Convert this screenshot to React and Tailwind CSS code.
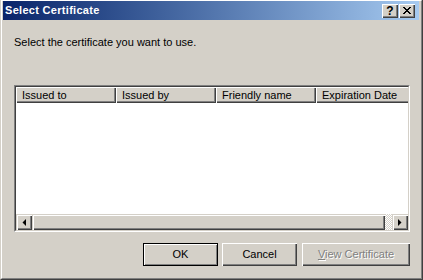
import React from 'react';

const raised =
  'shadow-[inset_1px_1px_0_#ffffff,inset_-1px_-1px_0_#404040,inset_-2px_-2px_0_#808080]';
const scrollRaised =
  'shadow-[inset_1px_1px_0_#d4d0c8,inset_2px_2px_0_#ffffff,inset_-1px_-1px_0_#404040,inset_-2px_-2px_0_#808080]';

const columns = ['Issued to', 'Issued by', 'Friendly name', 'Expiration Date'];

const TitleButton = ({ children, className = '' }) => (
  <div
    className={`w-[16px] h-[14px] bg-[#d4d0c8] flex items-center justify-center ${raised} ${className}`}
  >
    {children}
  </div>
);

const Arrow = ({ dir }) => (
  <svg width="4" height="7" viewBox="0 0 4 7" className="block">
    {dir === 'left' ? (
      <polygon points="4,0 4,7 0.5,3.5" fill="#000" />
    ) : (
      <polygon points="0,0 0,7 3.5,3.5" fill="#000" />
    )}
  </svg>
);

export default function App() {
  return (
    <div className="w-[423px] h-[280px] bg-[#d4d0c8] border-l border-r border-b border-l-[#d4d0c8] border-r-[#404040] border-b-[#404040] font-['Liberation_Sans',Arial,sans-serif] text-[11px] text-black select-none">
      <div className="h-full flex flex-col border-t border-l border-r border-b border-t-white border-l-white border-r-[#808080] border-b-[#808080] pl-px pr-[2px] pb-px">
        {/* Title bar */}
        <div className="h-[19px] shrink-0 flex items-center bg-linear-to-r from-[#0a246a] to-[#a6caf0] pl-[2px] pr-[4px]">
          <span className="text-white font-bold text-[11px] leading-[13px] tracking-[0.3px]">Select Certificate</span>
          <div className="ml-auto flex items-center gap-px">
            <TitleButton>
              <span className="font-bold text-[12px] leading-[12px] text-black mt-px">?</span>
            </TitleButton>
            <TitleButton>
              <svg width="8" height="7" viewBox="0 0 8 7" className="block" shapeRendering="crispEdges">
                <path
                  d="M0 0h2v1H0zM6 0h2v1H6zM1 1h2v1H1zM5 1h2v1H5zM2 2h4v1H2zM3 3h2v1H3zM2 4h4v1H2zM1 5h2v1H1zM5 5h2v1H5zM0 6h2v1H0zM6 6h2v1H6z"
                  fill="#000"
                />
              </svg>
            </TitleButton>
          </div>
        </div>

        {/* Body */}
        <div className="flex-1 flex flex-col pl-[11px]">
          <div className="mt-[16px] leading-[13px]">Select the certificate you want to use.</div>

          {/* List view */}
          <div className="mt-[36px] w-[396px] h-[147px] border border-t-[#808080] border-l-[#808080] border-r-white border-b-white">
            <div className="h-full border border-t-[#404040] border-l-[#404040] border-r-[#d4d0c8] border-b-[#d4d0c8] bg-white flex flex-col overflow-hidden">
              <div className="h-[16px] shrink-0 flex overflow-hidden bg-[#d4d0c8]">
                {columns.map((c) => (
                  <div
                    key={c}
                    className={`w-[100px] shrink-0 h-full flex items-center pl-[6px] leading-[13px] whitespace-nowrap ${raised}`}
                  >
                    {c}
                  </div>
                ))}
              </div>
              <div className="flex-1" />
              {/* Horizontal scrollbar */}
              <div className="h-[16px] shrink-0 flex">
                <div className={`w-[16px] h-full bg-[#d4d0c8] flex items-center justify-center ${scrollRaised}`}>
                  <Arrow dir="left" />
                </div>
                <div className={`flex-1 h-full bg-[#d4d0c8] ${scrollRaised}`} />
                <div className="w-[7px] h-full bg-[repeating-conic-gradient(#ffffff_0_25%,#d4d0c8_0_50%)] bg-[length:2px_2px]" />
                <div className={`w-[16px] h-full bg-[#d4d0c8] flex items-center justify-center ${scrollRaised}`}>
                  <Arrow dir="right" />
                </div>
              </div>
            </div>
          </div>

          {/* Buttons */}
          <div className="mt-[11px] w-[396px] flex justify-end">
            <div className="w-[75px] h-[23px] mr-[4px] border border-black">
              <div className="w-full h-full flex items-center justify-center shadow-[inset_1px_1px_0_#ffffff,inset_-1px_-1px_0_#808080]">
                OK
              </div>
            </div>
            <div className={`w-[75px] h-[23px] mr-[5px] flex items-center justify-center ${raised}`}>
              Cancel
            </div>
            <div
              className={`w-[108px] h-[23px] flex items-center justify-center text-[#808080] [text-shadow:1px_1px_0_#ffffff] ${raised}`}
            >
              <span>
                <span className="underline">V</span>iew Certificate
              </span>
            </div>
          </div>
        </div>
      </div>
    </div>
  );
}
